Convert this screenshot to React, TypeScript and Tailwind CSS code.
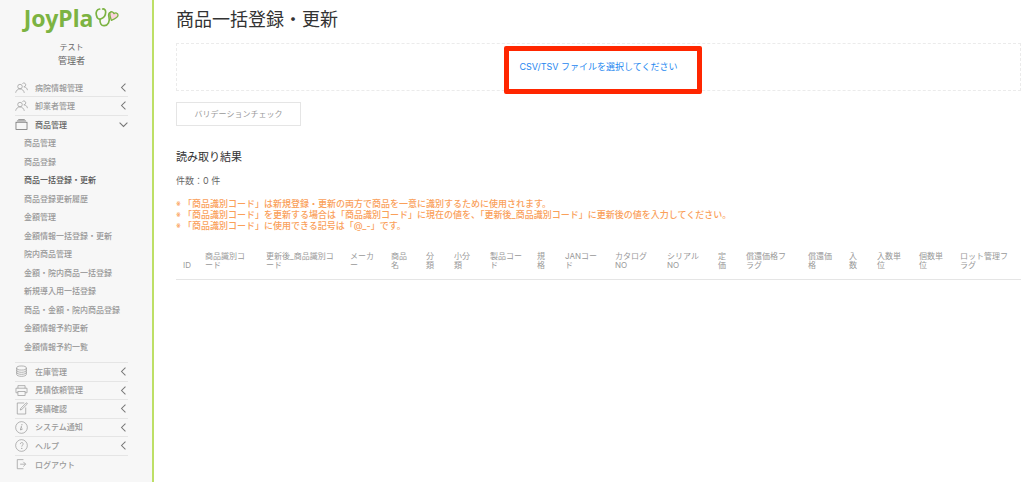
import type { ReactNode } from 'react'

type MenuEntry = { label: string; icon: ReactNode; open?: boolean; plain?: boolean }

const usersIcon = (
  <>
    <circle cx="7.7" cy="8.6" r="3.5" />
    <path d="M1,18.1 C1.7,14.6 4.4,12.1 7.6,12.1 C10.9,12.1 13.7,14.8 14.3,18.3" />
    <path d="M11.4,4 C12.8,2.4 15.4,2.8 16.3,4.7 C17.2,6.6 15.7,8.9 13.6,8.9 C16.5,8.9 18.8,11.3 19.2,14.1" />
  </>
)

const topMenu: MenuEntry[] = [
  { label: '病院情報管理', icon: usersIcon },
  { label: '卸業者管理', icon: usersIcon },
  {
    label: '商品管理',
    open: true,
    icon: (
      <>
        <path d="M5,2.5 H15 M3,4.5 H17" />
        <rect x="1.5" y="6.5" width="17" height="11" />
      </>
    ),
  },
]

const subMenu = [
  '商品管理',
  '商品登録',
  '商品一括登録・更新',
  '商品登録更新履歴',
  '金額管理',
  '金額情報一括登録・更新',
  '院内商品管理',
  '金額・院内商品一括登録',
  '新規導入用一括登録',
  '商品・金額・院内商品登録',
  '金額情報予約更新',
  '金額情報予約一覧',
]

const bottomMenu: MenuEntry[] = [
  {
    label: '在庫管理',
    icon: (
      <>
        <ellipse cx="10" cy="4.64" rx="7.5" ry="3.14" />
        <path d="M17.5,8.11 C17.5,9.85 14.14,11.25 10,11.25 C5.86,11.25 2.5,9.84 2.5,8.11" />
        <path d="M17.5,11.25 C17.5,12.99 14.14,14.39 10,14.39 C5.86,14.39 2.5,12.98 2.5,11.25" />
        <path d="M17.49,4.64 L17.5,14.36 C17.5,16.1 14.14,17.5 10,17.5 C5.86,17.5 2.5,16.09 2.5,14.36 L2.5,4.64" />
      </>
    ),
  },
  {
    label: '見積依頼管理',
    icon: (
      <>
        <polyline points="4.5 13.5 1.5 13.5 1.5 6.5 18.5 6.5 18.5 13.5 15.5 13.5" />
        <polyline points="15.5 6.5 15.5 2.5 4.5 2.5 4.5 6.5" />
        <rect x="4.5" y="11.5" width="11" height="6" />
      </>
    ),
  },
  {
    label: '実績確認',
    icon: (
      <>
        <path d="M18.65,1.68 C18.41,1.45 18.11,1.33 17.81,1.33 C17.5,1.33 17.21,1.45 16.98,1.68 L8.92,9.76 L8,12.33 L10.55,11.41 L18.65,3.34 C19.12,2.87 19.12,2.15 18.65,1.68 Z" />
        <polyline points="16.5 8.48 16.5 18.5 3.5 18.5 3.5 1.5 14.21 1.5" />
      </>
    ),
  },
  {
    label: 'システム通知',
    icon: (
      <>
        <circle cx="10" cy="10" r="9" />
        <path
          fill="currentColor"
          stroke="none"
          d="M12.13,11.59 C11.97,12.84 10.35,14.12 9.1,14.16 C6.17,14.2 9.89,9.46 8.74,8.37 C9.3,8.16 10.62,7.83 10.62,8.81 C10.62,9.63 10.12,10.55 9.88,11.32 C8.66,15.16 12.13,11.15 12.14,11.18 C12.16,11.21 12.16,11.35 12.13,11.59 Z M11.56,5.67 C11.56,6.67 9.36,7.15 9.36,6.03 C9.36,5 11.56,4.54 11.56,5.67 Z"
        />
      </>
    ),
  },
  {
    label: 'ヘルプ',
    icon: (
      <>
        <circle cx="10" cy="10" r="9" />
        <circle cx="10.44" cy="14.42" r="1.05" fill="currentColor" stroke="none" />
        <path d="M8.17,7.79 C8.17,4.75 12.72,4.73 12.72,7.72 C12.72,8.67 11.81,9.15 11.23,9.75 C10.75,10.24 10.51,10.73 10.45,11.4 C10.44,11.53 10.43,11.64 10.43,11.75" />
      </>
    ),
  },
  {
    label: 'ログアウト',
    plain: true,
    icon: (
      <>
        <polyline points="13 2.5 3.5 2.5 3.5 16.5 13 16.5" />
        <path d="M8,9.5 H16.3 M12.8,5.9 L16.4,9.5 L12.8,13.1" />
      </>
    ),
  },
]

const columns = [
  { label: 'ID', width: 'w-[22px]' },
  { label: '商品識別コ\nード', width: 'w-[61px]' },
  { label: '更新後_商品識別コ\nード', width: 'w-[84px]' },
  { label: 'メーカ\nー', width: 'w-[41px]' },
  { label: '商品\n名', width: 'w-[35px]' },
  { label: '分\n類', width: 'w-[28px]' },
  { label: '小分\n類', width: 'w-[36px]' },
  { label: '製品コー\nド', width: 'w-[47px]' },
  { label: '規\n格', width: 'w-[28px]' },
  { label: 'JANコー\nド', width: 'w-[50px]' },
  { label: 'カタログ\nNO', width: 'w-[52px]' },
  { label: 'シリアル\nNO', width: 'w-[51px]' },
  { label: '定\n価', width: 'w-[28px]' },
  { label: '償還価格フ\nラグ', width: 'w-[62px]' },
  { label: '償還価\n格', width: 'w-[41px]' },
  { label: '入\n数', width: 'w-[28px]' },
  { label: '入数単\n位', width: 'w-[42px]' },
  { label: '個数単\n位', width: 'w-[41px]' },
  { label: 'ロット管理フ\nラグ', width: 'w-[68px]' },
]

const notes = [
  '「商品識別コード」は新規登録・更新の両方で商品を一意に識別するために使用されます。',
  '「商品識別コード」を更新する場合は「商品識別コード」に現在の値を、「更新後_商品識別コード」に更新後の値を入力してください。',
  '「商品識別コード」に使用できる記号は「@_-」です。',
]

function Icon({ children }: { children: ReactNode }) {
  return (
    <svg viewBox="0 0 20 20" className="size-[13px] shrink-0" fill="none" stroke="currentColor" strokeWidth="1.1" aria-hidden="true">
      {children}
    </svg>
  )
}

function MenuItem({ entry }: { entry: MenuEntry }) {
  const className = `flex h-full w-full items-center text-left ${entry.open ? 'text-[#666]' : 'text-[#999]'}`
  const label = <span className="ml-[7px] flex-1 font-medium">{entry.label}</span>
  if (entry.plain) {
    return (
      <a href="#" className={className}>
        <Icon>{entry.icon}</Icon>
        {label}
      </a>
    )
  }
  return (
    <button type="button" aria-expanded={!!entry.open} className={className}>
      <Icon>{entry.icon}</Icon>
      {label}
      <svg viewBox="0 0 20 20" className="-mr-[2px] size-[13px] shrink-0 text-[#777]" fill="none" stroke="currentColor" strokeWidth="1.6" aria-hidden="true">
        <polyline points={entry.open ? '16 7 10 13 4 7' : '13 16 7 10 13 4'} />
      </svg>
    </button>
  )
}

function Logo() {
  return (
    <a href="#" className="flex items-center justify-center gap-px text-[#7cb342]">
      <span className="font-['Noto_Sans'] text-[23px] leading-[22px] font-bold">JoyPla</span>
      <svg viewBox="286 22 75 66" className="h-[22px] w-[25px] shrink-0" fill="none" stroke="currentColor" strokeWidth="5" strokeLinecap="round" strokeLinejoin="round" aria-hidden="true">
        <path d="M303 28 C294 29 291 38 293 46 C295 56 300 60 306 58 C315 55 321 46 321 37 C321 31 317 27 312 28" />
        <path d="M304 59 C303 71 308 79 317 78 C329 77 334 65 331 53 C329 45 330 39 336 38" />
        <path fill="#fbd3dc" strokeWidth="4" d="M338 62 C335 53 332 45 334 40 C337 34 344 36 346 42 C350 38 358 40 358 46 C359 53 348 58 338 62 Z" />
      </svg>
    </a>
  )
}

function Sidebar() {
  return (
    <aside className="w-[154px] shrink-0 border-r-2 border-[#bddf66] bg-[#f7f7f7] pt-[7px] pr-6 pl-[15px] text-[8px] leading-[12px]">
      <Logo />
      <div className="mt-3 text-center text-[#666]">
        <p>テスト</p>
        <p className="mt-[2px] text-[9px]">管理者</p>
      </div>
      <nav className="mt-3">
        <ul className="grid min-h-[55px] auto-rows-fr divide-y divide-[#e5e5e5]">
          {topMenu.map((entry) => (
            <li key={entry.label}>
              <MenuItem entry={entry} />
            </li>
          ))}
        </ul>
        <ul className="grid min-h-[222px] auto-rows-fr pl-[9px]">
          {subMenu.map((label) => (
            <li key={label} className="flex items-center whitespace-nowrap">
              <a href="#" className={label === '商品一括登録・更新' ? 'font-medium text-[#555]' : 'font-medium text-[#999]'}>
                {label}
              </a>
            </li>
          ))}
        </ul>
        <ul className="mt-[6px] grid min-h-28 auto-rows-fr divide-y divide-[#e5e5e5] border-t border-[#e5e5e5]">
          {bottomMenu.map((entry) => (
            <li key={entry.label}>
              <MenuItem entry={entry} />
            </li>
          ))}
        </ul>
      </nav>
    </aside>
  )
}

export default function App() {
  return (
    <div className="flex min-h-screen bg-white font-['Inter','Noto_Sans_CJK_JP',sans-serif] text-[9px] leading-[14px] text-[#666]">
      <Sidebar />
      <main className="min-w-0 flex-1 pt-2 pr-[3px] pl-[22px]">
        <h1 className="text-[18px] leading-[24px] text-[#333]">商品一括登録・更新</h1>

        <div className="relative mt-[11px] flex h-12 items-center justify-center border border-dashed border-[#ebebeb]">
          <a href="#" className="text-[#1e87f0]">
            CSV/TSV ファイルを選択してください
          </a>
          <span className="pointer-events-none absolute top-[2px] left-1/2 -ml-[95px] h-12 w-[198px] rounded-[2px] border-[5px] border-[#ff2600]" />
        </div>

        <button type="button" className="mt-[11px] h-6 w-[125px] border border-[#e5e5e5] text-center text-[8px] leading-[22px] text-[#999]">
          バリデーションチェック
        </button>

        <h2 className="mt-[22px] text-[11px] leading-[18px] text-[#333]">読み取り結果</h2>
        <p className="mt-2">件数：0 件</p>

        <div className="mt-[10px] font-medium text-[#faa05a]">
          {notes.map((note) => (
            <p key={note} className="flex items-center leading-[11px]">
              <span className="w-[7px] text-[7px]">※</span>
              {note}
            </p>
          ))}
        </div>

        <table className="mt-[13px] w-full table-fixed border-collapse text-left text-[8px] leading-[9px] text-[#999]">
          <colgroup>
            {columns.map((column) => (
              <col key={column.label} className={column.width} />
            ))}
          </colgroup>
          <thead>
            <tr className="border-b border-[#e5e5e5]">
              {columns.map((column) => (
                <th key={column.label} scope="col" className="pt-2 pb-[9px] pl-[7px] align-bottom font-normal whitespace-pre">
                  {column.label}
                </th>
              ))}
            </tr>
          </thead>
        </table>
      </main>
    </div>
  )
}
